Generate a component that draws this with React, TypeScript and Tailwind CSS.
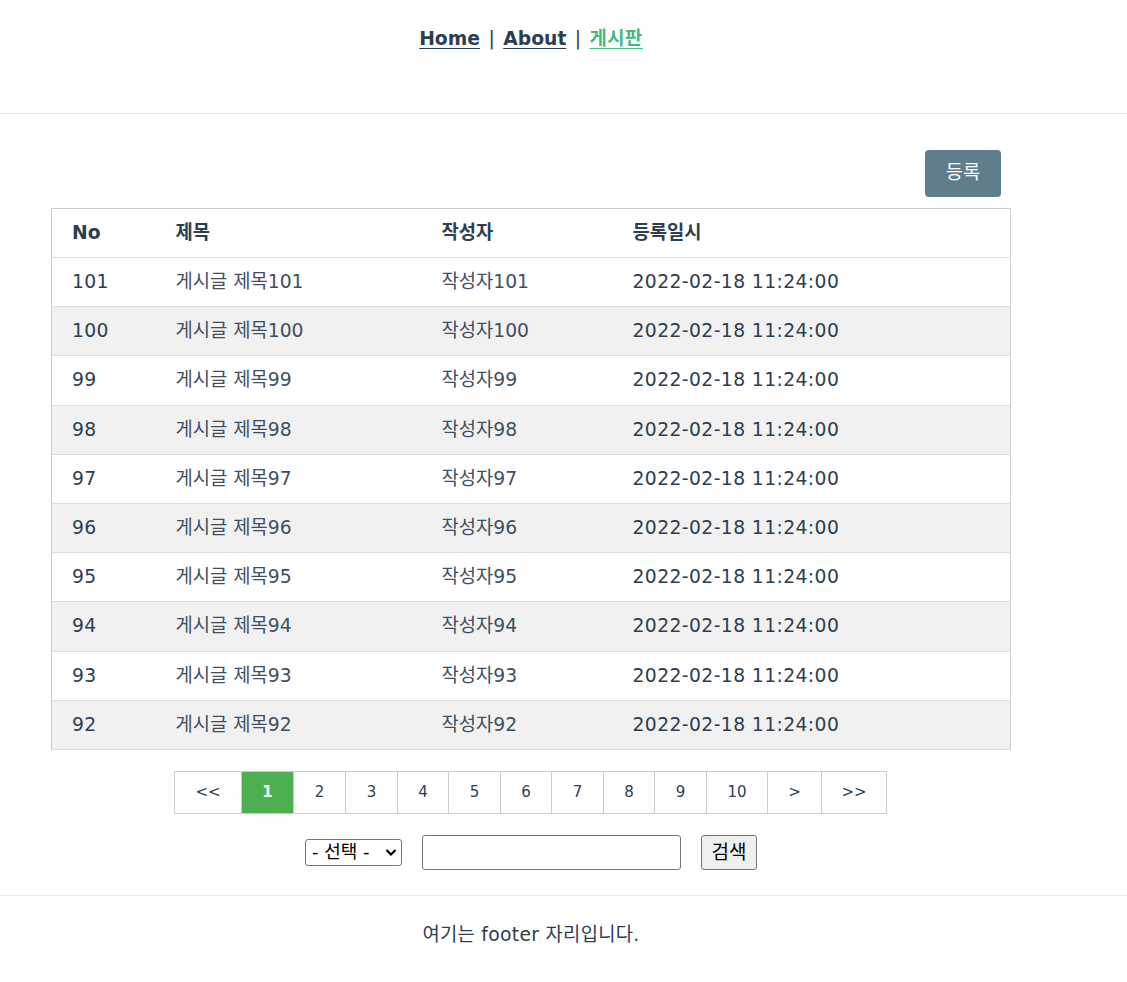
import React from "react";

const rows = Array.from({ length: 10 }, (_, i) => 101 - i);

const pages: { label: string; w: string; active?: boolean }[] = [
  { label: "<<", w: "w-[67px]" },
  { label: "1", w: "w-[52px]", active: true },
  { label: "2", w: "w-[52px]" },
  { label: "3", w: "w-[52px]" },
  { label: "4", w: "w-[51px]" },
  { label: "5", w: "w-[52px]" },
  { label: "6", w: "w-[51px]" },
  { label: "7", w: "w-[52px]" },
  { label: "8", w: "w-[51px]" },
  { label: "9", w: "w-[52px]" },
  { label: "10", w: "w-[61px]" },
  { label: ">", w: "w-[54px]" },
  { label: ">>", w: "w-[66px]" },
];

function Nav() {
  return (
    <header className="h-[114px] border-b border-[#ebebeb]">
      <div className="w-[1062px] pt-[25px] text-center text-[18.75px] leading-[28px]">
        <a className="font-bold text-[#2c3e50] underline underline-offset-[3px]">Home</a>
        <span className="mx-[2.5px] text-[#2c3e50]"> | </span>
        <a className="font-bold text-[#2c3e50] underline underline-offset-[3px]">About</a>
        <span className="mx-[2.5px] text-[#2c3e50]"> | </span>
        <a className="font-bold tracking-[0.5px] text-[#42b983] underline underline-offset-[3px]">게시판</a>
      </div>
    </header>
  );
}

function BoardTable() {
  return (
    <table className="w-[959px] table-fixed border-collapse border border-[#cccccc] text-[18.75px]">
      <colgroup>
        <col className="w-[114px]" />
        <col className="w-[266px]" />
        <col className="w-[191px]" />
        <col className="w-[388px]" />
      </colgroup>
      <thead>
        <tr className="border-b border-[#dddddd] bg-white text-left leading-[28px]">
          <th className="py-[10px] pl-[20px] pr-[10px] font-bold">No</th>
          <th className="py-[10px] px-[10px] font-bold">제목</th>
          <th className="py-[10px] px-[10px] font-bold">작성자</th>
          <th className="py-[10px] px-[10px] font-bold">등록일시</th>
        </tr>
      </thead>
      <tbody>
        {rows.map((n, i) => (
          <tr
            key={n}
            className={`h-[49.2px] border-b border-[#dddddd] leading-[28px] ${
              i % 2 === 1 ? "bg-[#f1f1f1]" : "bg-white"
            }`}
          >
            <td className="py-[10px] pl-[20px] pr-[10px] tracking-[0.3px]">{n}</td>
            <td className="py-[10px] px-[10px] text-[#3f4f5f]">게시글 제목{n}</td>
            <td className="py-[10px] px-[10px] text-[#3f4f5f]">작성자{n}</td>
            <td className="py-[10px] px-[10px] tracking-[0.4px]">2022-02-18 11:24:00</td>
          </tr>
        ))}
      </tbody>
    </table>
  );
}

function Pagination() {
  return (
    <div className="mt-[21px] flex justify-center pr-[1px]">
      {pages.map((p, i) => (
        <div
          key={p.label}
          className={`${p.w} h-[43px] flex items-center justify-center border-y border-l border-[#cccccc] text-[15px] ${
            i === pages.length - 1 ? "border-r" : ""
          } ${p.active ? "bg-[#4caf50] font-bold text-white" : "bg-white text-[#2c3e50]"}`}
        >
          {p.label}
        </div>
      ))}
    </div>
  );
}

function SearchBar() {
  return (
    <div className="mt-[21px] flex items-center justify-center gap-[20px] text-black">
      <div className="relative h-[27px] w-[97px]">
        <select className="h-full w-full appearance-none rounded-[3px] border border-[#767676] bg-white pl-[6px] text-[18px] leading-none text-black">
          <option>- 선택 -</option>
        </select>
        <svg
          className="pointer-events-none absolute right-[5px] top-[9px]"
          width="12"
          height="9"
          viewBox="0 0 12 9"
          fill="none"
        >
          <path d="M1.5 2 L6 6.5 L10.5 2" stroke="#000" strokeWidth="2.2" />
        </svg>
      </div>
      <input className="h-[35px] w-[259px] rounded-[3px] border border-[#767676] bg-white" />
      <button className="h-[35px] w-[56px] rounded-[3px] border border-[#767676] bg-[#efefef] text-[19px] text-black">
        검색
      </button>
    </div>
  );
}

export default function App() {
  return (
    <div
      className="min-h-screen bg-white text-[#2c3e50]"
      style={{ fontFamily: '"DejaVu Sans", "Noto Sans CJK KR", sans-serif' }}
    >
      <Nav />
      <main className="w-[1062px] px-[51px] pt-[36px]">
        <div className="flex justify-end pr-[10px]">
          <button className="h-[47px] w-[76px] rounded-[4px] bg-[#607d8b] text-[18.75px] text-white">
            등록
          </button>
        </div>
        <div className="mt-[11px]">
          <BoardTable />
        </div>
        <Pagination />
        <SearchBar />
      </main>
      <footer className="mt-[25px] border-t border-[#ebebeb]">
        <div className="w-[1062px] pt-[25px] text-center text-[18.75px] leading-[28px] tracking-[0.3px]">
          여기는 footer 자리입니다.
        </div>
      </footer>
    </div>
  );
}
